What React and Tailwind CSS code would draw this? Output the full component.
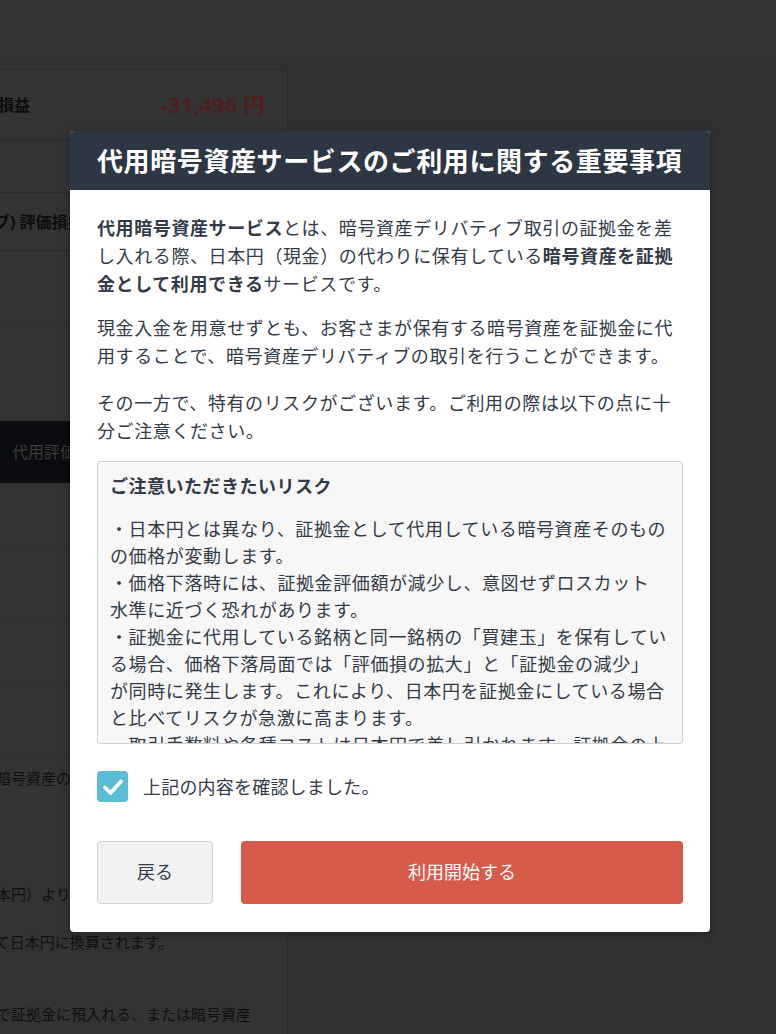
import React from "react";

const jp = { fontFamily: "'Noto Sans', 'Noto Sans CJK JP', sans-serif" };

const riskLines = [
  "・日本円とは異なり、証拠金として代用している暗号資産そのもの",
  "の価格が変動します。",
  "・価格下落時には、証拠金評価額が減少し、意図せずロスカット",
  "水準に近づく恐れがあります。",
  "・証拠金に代用している銘柄と同一銘柄の「買建玉」を保有してい",
  "る場合、価格下落局面では「評価損の拡大」と「証拠金の減少」",
  "が同時に発生します。これにより、日本円を証拠金にしている場合",
  "と比べてリスクが急激に高まります。",
  "・取引手数料や各種コストは日本円で差し引かれます。証拠金の上",
  "限を超えた場合は追加の入金が必要となります。",
];

function Background() {
  return (
    <div className="h-full bg-[#313131]">
      <div className="h-[55px] bg-[#343434]" />
      <div className="pt-[14px]">
        <div className="-ml-[54px] w-[342px] h-[980px] bg-[#333333] border-r border-t border-[#2b2b2b] rounded-tr-[4px]">
          <div className="h-[70px] flex items-center justify-between pl-5 pr-[22px] border-b border-[#2a2a2a]">
            <span className="text-[16px] font-bold text-[#0d0d0d]">評価損益</span>
            <span
              className="text-[22px] font-bold text-[#4a1f1c]"
              style={{ fontFamily: "'Noto Sans', 'Noto Sans CJK JP', sans-serif" }}
            >
              -31,496 円
            </span>
          </div>
          <div className="h-[53px] border-b border-[#2a2a2a]" />
          <div className="h-[58px] flex items-center pl-[17px] border-b border-[#2a2a2a]">
            <span className="text-[16px] font-bold text-[#0d0d0d]">ティブ) 評価損益</span>
          </div>
          <div className="h-[73px] border-b border-[#303030]" />
          <div className="h-[97px]" />
          <div className="h-[62px] bg-[#0b0c0f] flex items-center pl-[66px]">
            <span className="text-[16px] text-[#3a3a3a]">代用評価額の詳細</span>
          </div>
          <div className="h-[67px] border-b border-[#303030]" />
          <div className="h-[68px] border-b border-[#303030]" />
          <div className="h-[68px] border-b border-[#303030]" />
          <div className="h-[68px] border-b border-[#303030]" />
          <div className="pl-5 pt-[12px] text-[15px] leading-[24px] text-[#101010] whitespace-nowrap">
            <p>代用暗号資産の評価について</p>
            <p className="mt-[92px]">（日本円）より評価されます。</p>
            <p className="mt-[24px]">よって日本円に換算されます。</p>
            <p className="mt-[48px]">現金で証拠金に預入れる、または暗号資産</p>
          </div>
        </div>
      </div>
    </div>
  );
}

function Modal() {
  return (
    <div className="absolute left-[70px] top-[131px] w-[640px] bg-white rounded-[4px] overflow-hidden shadow-[0_2px_10px_rgba(0,0,0,0.3)]">
      <div className="h-[59px] bg-[#2d3643] flex items-center pl-[27px]">
        <h2 className="text-[26px] leading-none font-bold text-white tracking-[0.6px] whitespace-nowrap">
          代用暗号資産サービスのご利用に関する重要事項
        </h2>
      </div>
      <div className="px-[27px] pt-[24px] pb-[28px] text-[#333b46]">
        <p className="text-[18px] leading-[28px] tracking-[0.6px]">
          <b>代用暗号資産サービス</b>とは、暗号資産デリバティブ取引の証拠金を差し入れる際、日本円（現金）の代わりに保有している<b>暗号資産を証拠金として利用できる</b>サービスです。
        </p>
        <p className="mt-[16px] text-[18px] leading-[28px] tracking-[0.6px]">
          現金入金を用意せずとも、お客さまが保有する暗号資産を証拠金に代用することで、暗号資産デリバティブの取引を行うことができます。
        </p>
        <p className="mt-[19px] text-[18px] leading-[28px] tracking-[0.6px]">
          その一方で、特有のリスクがございます。ご利用の際は以下の点に十分ご注意ください。
        </p>
        <div className="mt-[16px] h-[283px] overflow-hidden border border-[#d2d2d2] rounded-[3px] bg-[#f7f7f7] px-[12px] pt-[10px]">
          <p className="text-[18px] leading-[28px] font-bold tracking-[0.5px]">ご注意いただきたいリスク</p>
          <div className="mt-[16px] text-[18px] leading-[27px] tracking-[0.6px] whitespace-nowrap">
            {riskLines.map((l, i) => (
              <p key={i}>{l}</p>
            ))}
          </div>
        </div>
        <label className="mt-[27px] flex items-center gap-[15px] cursor-pointer">
          <span className="w-[31px] h-[31px] rounded-[4px] bg-[#5bbcd6] flex items-center justify-center shrink-0">
            <svg width="24" height="24" viewBox="0 0 24 24" fill="none">
              <path d="M4 12.5 L9.5 18 L20 6.5" stroke="white" strokeWidth="3.8" strokeLinecap="round" strokeLinejoin="round" />
            </svg>
          </span>
          <span className="text-[18px] leading-[28px] tracking-[0.2px]">上記の内容を確認しました。</span>
        </label>
        <div className="mt-[39px] flex gap-[28px]">
          <button className="w-[116px] h-[63px] rounded-[4px] border border-[#cfcfcf] bg-[#f2f2f2] text-[18px] text-[#333b46]">
            戻る
          </button>
          <button className="flex-1 h-[63px] rounded-[4px] bg-[#d65b4a] text-[18px] text-white">
            利用開始する
          </button>
        </div>
      </div>
    </div>
  );
}

export default function App() {
  return (
    <div className="relative w-[776px] h-[1034px] overflow-hidden" style={jp}>
      <Background />
      <Modal />
    </div>
  );
}
